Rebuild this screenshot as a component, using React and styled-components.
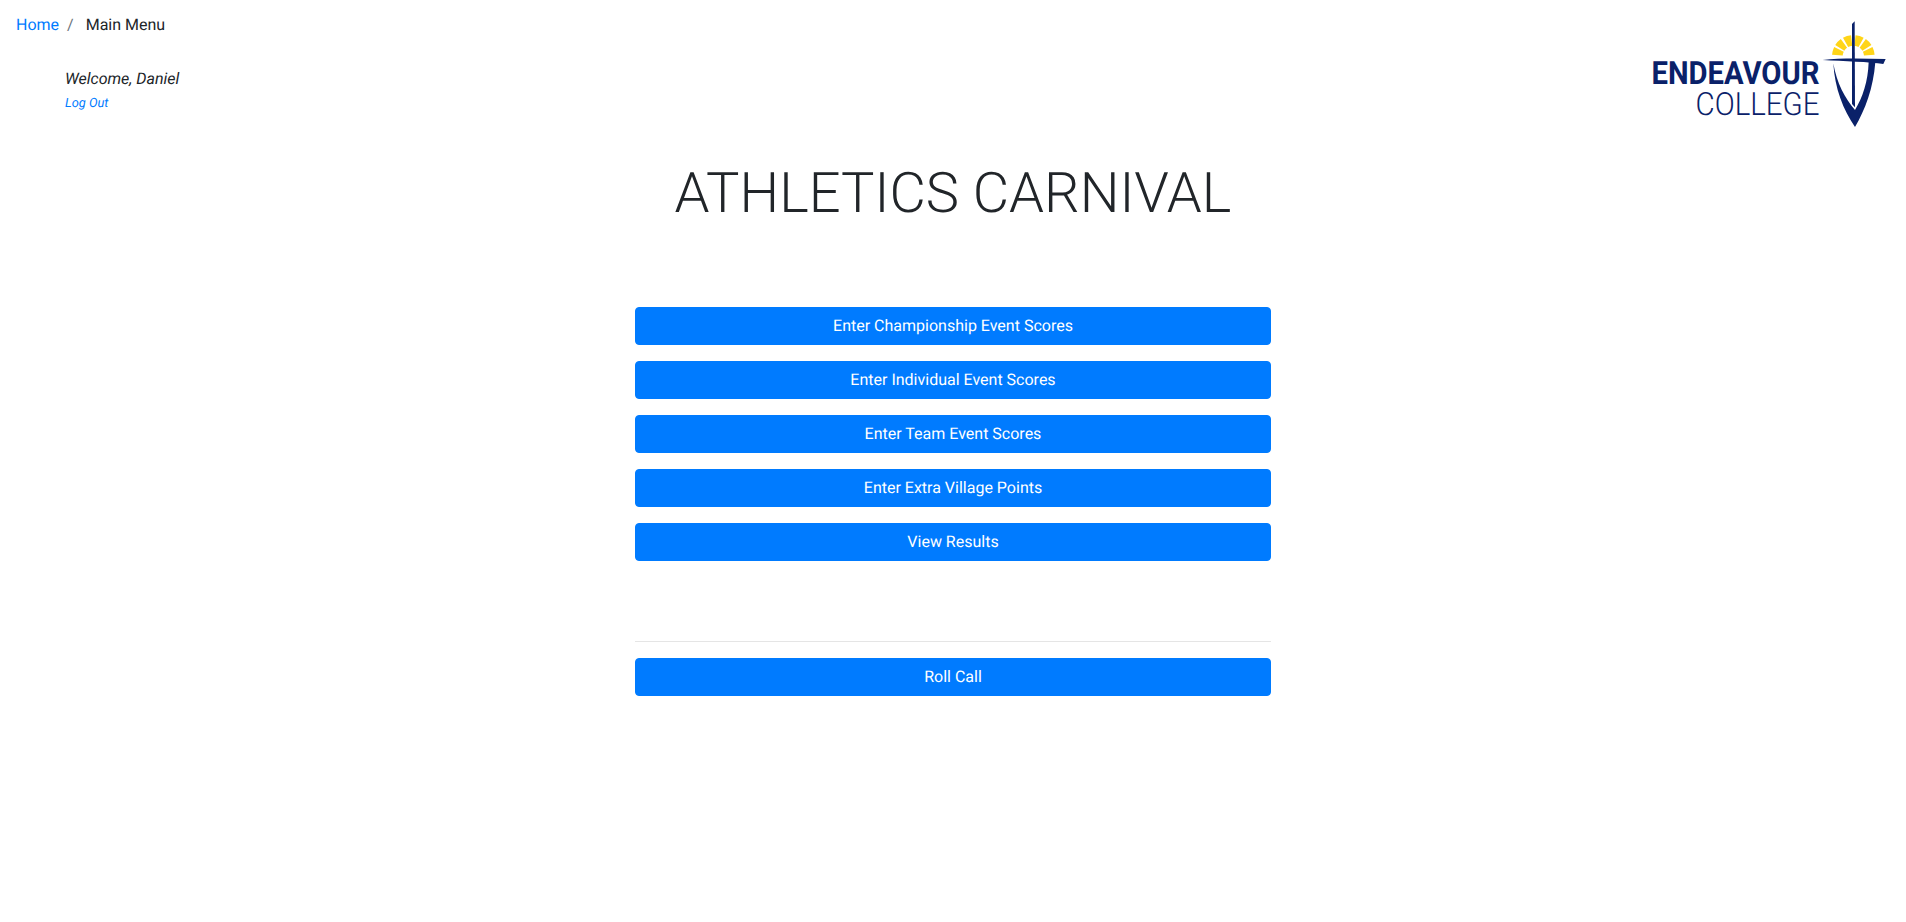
import React from 'react';
import styled, { createGlobalStyle } from 'styled-components';

const GlobalStyle = createGlobalStyle`
  body {
    margin: 0;
    background: #fff;
    color: #212529;
    font-family: Roboto, "Liberation Sans", sans-serif;
    font-size: 16px;
    line-height: 1.5;
    text-rendering: geometricPrecision;
  }
`;

const Page = styled.div`
  display: flex;
  flex-direction: column;
  min-height: 922px;
`;

const Header = styled.header`
  display: flex;
  justify-content: space-between;
  align-items: flex-start;
  height: 136px;
`;

const Breadcrumb = styled.nav`
  display: flex;
  padding: 13px 16px 12px;
  height: 24px;
`;

const Crumb = styled.a`
  color: #007bff;
  text-decoration: none;
`;

const Separator = styled.span`
  color: #6c757d;
  padding: 0 8px;
`;

const Current = styled.span`
  padding-left: 4px;
`;

const Welcome = styled.div`
  padding: 18px 0 0 65px;
  font-style: italic;
`;

const LogOut = styled.a`
  display: block;
  margin-top: 3px;
  color: #007bff;
  font-size: 12.8px;
  line-height: 19px;
  text-decoration: none;
`;

const LogoSvg = styled.svg`
  display: block;
  margin: 20px 16px 0 0;
  width: 240px;
  height: 110px;
`;

const Title = styled.h1`
  margin: 21px 0 0;
  text-align: center;
  font-size: 56px;
  font-weight: 300;
  line-height: 72px;
`;

const Menu = styled.main`
  display: flex;
  flex-direction: column;
  gap: 16px;
  width: 636px;
  margin: 78px auto 0;
`;

const MenuButton = styled.button`
  display: block;
  width: 100%;
  height: 38px;
  padding: 6px 12px;
  border: 1px solid #007bff;
  border-radius: 4px;
  background: #007bff;
  color: #fff;
  font-family: inherit;
  font-size: 16px;
  line-height: 24px;
  text-rendering: geometricPrecision;
  cursor: pointer;
`;

const Divider = styled.hr`
  width: 100%;
  height: 1px;
  margin: 64px 0 0;
  border: 0;
  background: rgba(0, 0, 0, 0.1);
`;

const LogoText = styled.text`
  font-family: Roboto, "Liberation Sans", sans-serif;
  fill: #0a2169;
`;

const NAVY = '#0a2169';
const YELLOW = '#ffd518';

// annular wedge round the cross, angles measured from straight up
const ray = (from, to, inner, outer) => {
  const cx = 130;
  const cy = 139;
  const pt = (deg, r) => {
    const a = (deg * Math.PI) / 180;
    return `${(cx + r * Math.sin(a)).toFixed(1)},${(cy - r * Math.cos(a)).toFixed(1)}`;
  };
  return `M${pt(from, inner)} L${pt(from, outer)} A${outer},${outer} 0 0 1 ${pt(to, outer)} L${pt(to, inner)} A${inner},${inner} 0 0 0 ${pt(from, inner)} Z`;
};

const RAYS = [
  [-86, -64],
  [-58, -36],
  [-29, -6],
  [6, 29],
  [36, 58],
  [64, 86],
];

const Logo = () => (
  <LogoSvg viewBox="0 0 240 110">
    <LogoText x="1.5" y="63.5" fontSize="32" fontWeight="700" textLength="168" lengthAdjust="spacingAndGlyphs">
      ENDEAVOUR
    </LogoText>
    <LogoText x="45.5" y="95" fontSize="32" fontWeight="300" textLength="124" lengthAdjust="spacingAndGlyphs">
      COLLEGE
    </LogoText>
    <g transform="translate(160 -10) scale(0.3333)">
      {RAYS.map(([from, to]) => (
        <path key={from} d={ray(from, to, 32, 64)} fill={YELLOW} />
      ))}
      <path d="M126,42 L134,34 L135,292 L126,282 Z" fill={NAVY} />
      <path d="M38,150 C90,144 160,146 227,147 L220,162 C180,156 100,153 38,150 Z" fill={NAVY} />
      <path
        d="M70,160 C74,235 100,300 135,351 C165,300 190,235 196,156 L176,156 C174,215 158,262 135,300 C105,265 80,220 70,160 Z"
        fill={NAVY}
      />
    </g>
  </LogoSvg>
);

const ITEMS = [
  'Enter Championship Event Scores',
  'Enter Individual Event Scores',
  'Enter Team Event Scores',
  'Enter Extra Village Points',
  'View Results',
];

export default function App() {
  return (
    <Page>
      <GlobalStyle />
      <Header>
        <div>
          <Breadcrumb>
            <Crumb href="#">Home</Crumb>
            <Separator>/</Separator>
            <Current>Main Menu</Current>
          </Breadcrumb>
          <Welcome>
            Welcome, Daniel
            <LogOut href="#">Log Out</LogOut>
          </Welcome>
        </div>
        <Logo />
      </Header>
      <Title>ATHLETICS CARNIVAL</Title>
      <Menu>
        {ITEMS.map((item) => (
          <MenuButton key={item}>{item}</MenuButton>
        ))}
        <Divider />
        <MenuButton>Roll Call</MenuButton>
      </Menu>
    </Page>
  );
}
